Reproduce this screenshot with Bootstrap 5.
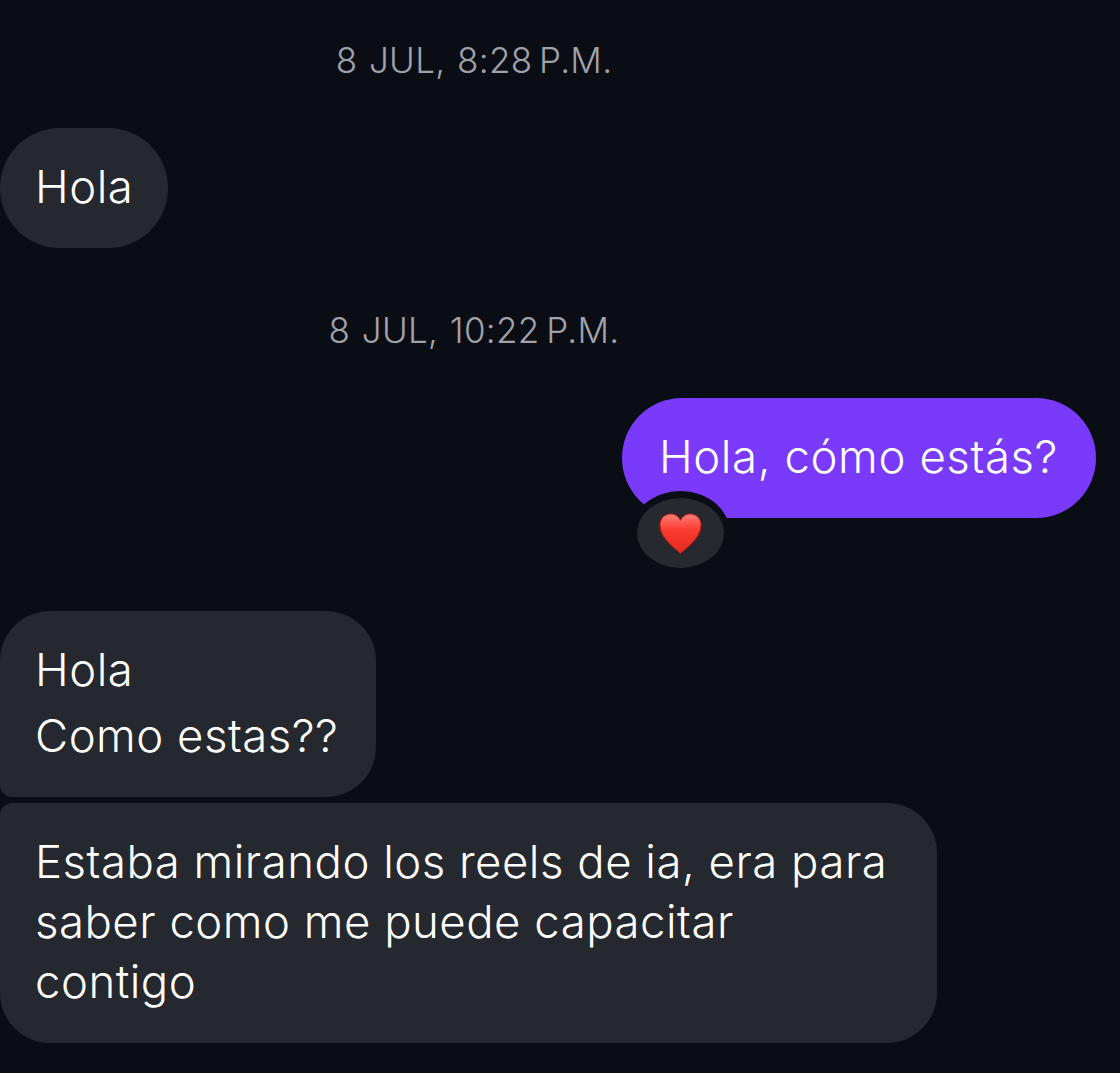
<!DOCTYPE html>
<html lang="es">
<head>
  <meta charset="UTF-8">
  <title>Chat</title>
  <link href="https://cdn.jsdelivr.net/npm/bootstrap@5.3.0/dist/css/bootstrap.min.css" rel="stylesheet">
  <style>
    html, body { height: 100%; }
    body { background: #0a0d14; color: #fff; font-family: Inter, "Liberation Sans", sans-serif; overflow: hidden; }
    .chat-wrap { padding-top: 40px; }
    .stamp { height: 40px; line-height: 40px; font-size: 35px; letter-spacing: 0.3px; word-spacing: 1.5px; color: #a0a2a9; padding-right: 172px; font-weight: 350; }
    .stamp-2 { margin-top: 62px; }
    .bub { font-size: 45.5px; line-height: 60px; padding: 29px 36px 31px 35px; letter-spacing: 0.6px; font-weight: 350; }
    .bub-in { background: #25282f; color: #fff; letter-spacing: 0.5px; }
    .bub-hola { margin-top: 48px; border-radius: 60px; width: 168px; }
    .bub-two { margin-top: 93px; width: 376px; border-radius: 50px 50px 50px 12px; }
    .bub-two span { display: block; }
    .bub-two span + span { margin-top: 6px; }
    .bub-three { margin-top: 6px; width: 937px; border-radius: 12px 50px 50px 50px; }
    .row-out { margin-top: 48px; padding-right: 24px; }
    .bub-out { background: #7a3afb; border-radius: 60px; width: 474px; padding-left: 37px; position: relative; white-space: nowrap; }
    .react { position: absolute; left: 9px; top: 93px; width: 99px; height: 84px; background: #0a0d14; border-radius: 50%; }
    .react-in { position: absolute; left: 6px; top: 7px; width: 87px; height: 70px; border-radius: 50%; background: #27292e; }
    .react-in svg { width: 43px; height: 43px; }
  </style>
</head>
<body>
  <div class="chat-wrap">
    <div class="stamp text-center">8 JUL, 8:28&#8201;P.M.</div>
    <div class="bub bub-in bub-hola">Hola</div>

    <div class="stamp stamp-2 text-center">8 JUL, 10:22&#8201;P.M.</div>
    <div class="row-out d-flex justify-content-end">
      <div class="bub bub-out">Hola, cómo estás?
        <div class="react">
          <div class="react-in d-flex align-items-center justify-content-center">
            <svg viewBox="0 0 44 44" aria-hidden="true">
              <defs>
                <linearGradient id="hg" x1="0" y1="0" x2="0" y2="1">
                  <stop offset="0" stop-color="#ff8078"/>
                  <stop offset="0.4" stop-color="#fb3b30"/>
                  <stop offset="1" stop-color="#e42a22"/>
                </linearGradient>
              </defs>
              <path d="M22 42.500 C20 39.500 1 28 1 13.500 C1 6.500 6 2 12 2 C16.500 2 20 4.500 22 8.500 C24 4.500 27.500 2 32 2 C38 2 43 6.500 43 13.500 C43 28 24 39.500 22 42.500 Z" fill="url(#hg)" stroke="#b91c16" stroke-width="1"/>
            </svg>
          </div>
        </div>
      </div>
    </div>

    <div class="bub bub-in bub-two"><span>Hola</span><span>Como estas??</span></div>
    <div class="bub bub-in bub-three">Estaba mirando los reels de ia, era para<br>saber como me puede capacitar<br>contigo</div>
  </div>
  <script src="https://cdn.jsdelivr.net/npm/bootstrap@5.3.0/dist/js/bootstrap.bundle.min.js"></script>
</body>
</html>
